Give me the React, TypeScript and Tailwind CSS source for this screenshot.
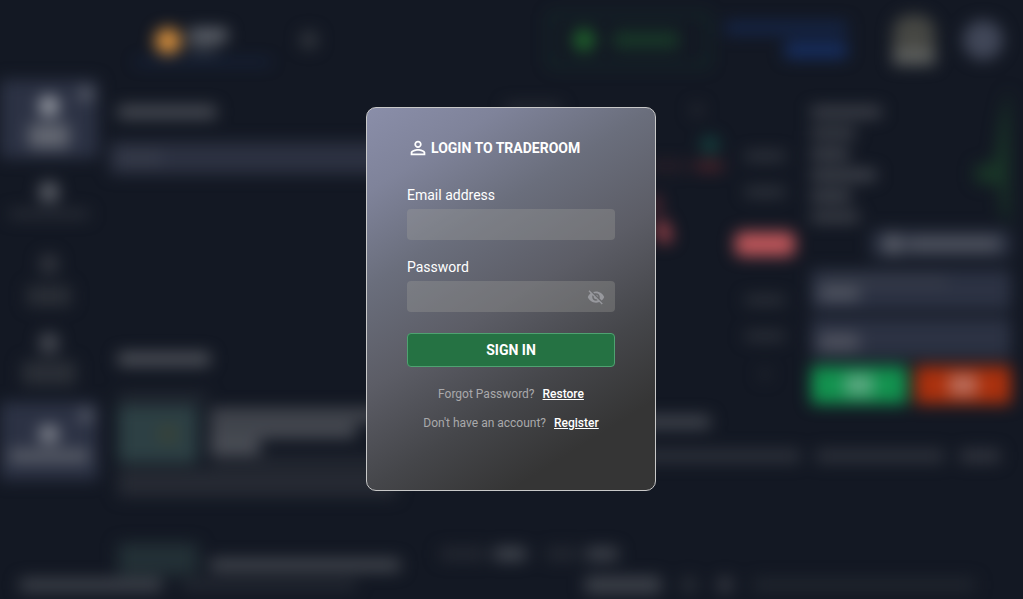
import type { ReactNode } from "react";
import { MdOutlinePersonOutline, MdVisibilityOff } from "react-icons/md";

function Block({ className }: { className: string }) {
  return <div className={`shrink-0 ${className}`} />;
}

function Header() {
  return (
    <div className="flex h-20 items-center pr-5 pl-[135px]">
      <div className="flex h-[46px] w-[136px] items-center gap-2 border-b-2 border-[#1a3a74] pt-1 pl-5">
        <Block className="size-[26px] rounded-full bg-[#d9913e]" />
        <div className="flex flex-col gap-1">
          <Block className="h-3 w-[38px] bg-[#6b6f77]" />
          <Block className="h-2 w-7 bg-[#3e434d]" />
        </div>
      </div>
      <Block className="ml-[29px] size-[18px] rounded-full bg-[#34383f]" />
      <div className="ml-auto flex h-[54px] w-[160px] items-center gap-[18px] rounded border-2 border-[#174030] pl-[22px]">
        <Block className="size-[22px] rounded-full bg-[#1f652c]" />
        <Block className="h-4 w-[66px] bg-[#183a28]" />
      </div>
      <div className="ml-4 flex w-[122px] flex-col items-end gap-2">
        <Block className="h-3 w-full bg-[#15264a]" />
        <Block className="h-4 w-[62px] bg-[#162e61]" />
      </div>
      <div className="ml-[46px] flex h-[50px] w-[42px] flex-col justify-end rounded-t-2xl bg-[#464743]">
        <Block className="h-4 bg-[#5e605e]" />
      </div>
      <Block className="ml-7 size-10 rounded-full bg-[#414758]" />
    </div>
  );
}

function SideTile({ children, badge }: { children: ReactNode; badge: string }) {
  return (
    <div className="relative flex h-[78px] w-[98px] shrink-0 flex-col items-center gap-2 bg-[#2c3244] pt-4">
      <div className={`absolute top-2 right-1.5 size-3 rounded-full ${badge}`} />
      {children}
    </div>
  );
}

function Sidebar() {
  return (
    <div className="flex w-[98px] flex-col">
      <SideTile badge="bg-[#74777f]">
        <Block className="size-5 rounded-full bg-[#a3a6ad]" />
        <Block className="h-6 w-10 bg-[#646872]" />
      </SideTile>
      <div className="flex h-[86px] shrink-0 flex-col items-center gap-2 pt-6">
        <Block className="size-5 rounded-full bg-[#63666e]" />
        <Block className="h-2 w-20 bg-[#2c3039]" />
      </div>
      <div className="flex h-[79px] shrink-0 flex-col items-center gap-3 pt-2.5">
        <Block className="size-5 rounded-full bg-[#34373f]" />
        <Block className="h-5 w-11 bg-[#2b2f37]" />
      </div>
      <div className="flex h-[79px] shrink-0 flex-col items-center gap-2 pt-2.5">
        <Block className="size-5 rounded-full bg-[#4c4f57]" />
        <Block className="h-6 w-[54px] bg-[#2b2f37]" />
      </div>
      <SideTile badge="bg-[#6b6f79]">
        <Block className="mt-2 h-4 w-5 rounded-full bg-[#8c8f97]" />
        <Block className="h-3 w-20 bg-[#5c606a]" />
      </SideTile>
    </div>
  );
}

function NewsPanel() {
  return (
    <div className="ml-3 flex w-[330px] flex-col">
      <Block className="mt-[26px] ml-2 h-3 w-[98px] bg-[#4e5159]" />
      <div className="mt-6 flex h-8 shrink-0 items-center bg-[#2c3141] pl-2">
        <Block className="h-3 w-11 bg-[#373c4a]" />
      </div>
      <Block className="mt-[179px] ml-2 h-3 w-[92px] bg-[#55585f]" />
      <Block className="mt-7 ml-2 h-2 w-[90px] bg-[#252a33]" />
      <div className="mt-1 ml-2 flex shrink-0 gap-2">
        <div className="flex h-[58px] w-20 shrink-0 items-center justify-end bg-[#2d4044] pr-5">
          <Block className="size-5 rounded-full bg-[#384238]" />
        </div>
        <div className="flex flex-col gap-1 pt-1 pl-1">
          <Block className="h-3 w-[190px] bg-[#4c4f56]" />
          <Block className="h-3 w-[146px] bg-[#53565d]" />
          <Block className="h-3 w-[50px] bg-[#5a5d64]" />
          <Block className="h-2 w-[190px] bg-[#292d36]" />
        </div>
      </div>
      <Block className="mt-1 ml-2 h-7 w-[278px] bg-[#262a33]" />
      <div className="mt-[46px] ml-2 flex shrink-0 gap-3">
        <Block className="h-8 w-20 bg-[#233036]" />
        <Block className="mt-4 h-3 w-[190px] bg-[#464a51]" />
      </div>
    </div>
  );
}

function PriceScale() {
  return (
    <div className="mr-1 flex w-[60px] flex-col items-center gap-7 pt-[72px]">
      <Block className="h-2 w-10 bg-[#373b43]" />
      <Block className="h-2 w-10 bg-[#373b43]" />
      <Block className="mt-2 h-6 w-full rounded-md bg-[#be565a]" />
      <Block className="mt-3 h-2 w-10 bg-[#33373f]" />
      <Block className="h-2 w-10 bg-[#33373f]" />
      <Block className="size-3 rounded-full bg-[#22262f]" />
    </div>
  );
}

function Chart() {
  return (
    <div className="flex min-w-0 flex-1 justify-end gap-2">
      <div className="flex flex-1 flex-col">
        <div className="flex justify-end gap-[130px] pt-6 pr-6">
          <Block className="h-2 w-14 bg-[#2c3039]" />
          <Block className="size-3 rounded-full bg-[#292c34]" />
        </div>
        <Block className="mt-5 mr-2 size-[18px] self-end rounded-full bg-[#15423f]" />
        <div className="mt-2 flex gap-2 self-end pr-1">
          <Block className="h-2 w-10 bg-[#2f2028]" />
          <Block className="h-2 w-7 bg-[#5a262c]" />
        </div>
        <svg className="mt-4 mr-10 h-16 w-12 self-end" viewBox="0 0 48 64" aria-hidden="true">
          <path d="M16 10L17 28" stroke="#642c35" strokeWidth="9" fill="none" />
          <path d="M21 36L28 56" stroke="#a0434a" strokeWidth="13" fill="none" />
        </svg>
      </div>
      <PriceScale />
    </div>
  );
}

function OrderPanel() {
  return (
    <div className="flex w-[200px] flex-col">
      <div className="flex justify-between">
        <div className="flex flex-col gap-[11px] pt-[27px]">
          <Block className="h-2.5 w-[70px] bg-[#454850]" />
          <Block className="h-2.5 w-11 bg-[#42454d]" />
          <Block className="h-2.5 w-[38px] bg-[#484b53]" />
          <Block className="h-2.5 w-[65px] bg-[#484b53]" />
          <Block className="h-2.5 w-10 bg-[#484b53]" />
          <Block className="h-2.5 w-12 bg-[#42454d]" />
        </div>
        <svg className="h-[150px] w-9" viewBox="0 0 36 150" aria-hidden="true">
          <path d="M34 8V148L26 126V106L0 102V86L20 82L26 40Z" fill="#193527" />
        </svg>
      </div>
      <div className="flex h-7 w-[140px] items-center gap-1 self-end rounded bg-[#2a3040] px-3">
        <Block className="size-5 rounded-full bg-[#5c606a]" />
        <Block className="h-3 w-[92px] bg-[#565a64]" />
      </div>
      <div className="mt-3 flex h-10 flex-col gap-1 bg-[#2c3243] p-2">
        <Block className="h-1.5 w-32 bg-[#3d424d]" />
        <Block className="h-3 w-10 bg-[#555965]" />
      </div>
      <div className="mt-2 flex h-10 flex-col justify-end bg-[#2c3243] p-2">
        <Block className="h-4 w-10 bg-[#50535f]" />
      </div>
      <div className="mt-2 grid h-[38px] grid-cols-2 gap-2">
        <div className="grid place-items-center bg-[#13924f]">
          <Block className="h-5 w-7 bg-[#5fa883]" />
        </div>
        <div className="grid place-items-center bg-[#aa310e]">
          <Block className="h-5 w-7 bg-[#b9705f]" />
        </div>
      </div>
    </div>
  );
}

function InfoPanel() {
  return (
    <div className="flex flex-1 flex-col pt-2">
      <Block className="ml-[180px] h-3 w-[90px] bg-[#464a52]" />
      <div className="mt-[22px] flex gap-4 pl-[180px]">
        <Block className="h-3 w-[180px] bg-[#30343d]" />
        <Block className="h-3 w-[128px] bg-[#30343d]" />
        <Block className="h-3 w-10 bg-[#353841]" />
      </div>
      <div className="mt-[86px] flex gap-2">
        <Block className="h-3 w-[46px] bg-[#252932]" />
        <Block className="h-3 w-8 bg-[#484c54]" />
        <Block className="ml-3 h-3 w-8 bg-[#252932]" />
        <Block className="h-3 w-8 bg-[#43474f]" />
      </div>
    </div>
  );
}

function Footer() {
  return (
    <div className="flex h-7 shrink-0 items-center pl-5">
      <Block className="h-3 w-[142px] bg-[#42464e]" />
      <Block className="ml-5 h-2 w-[174px] bg-[#2a2e37]" />
      <div className="mr-12 ml-auto flex items-center gap-5">
        <Block className="h-4 w-[76px] bg-[#40444c]" />
        <Block className="size-4 rounded-full bg-[#2b2f37]" />
        <Block className="size-4 rounded-full bg-[#393c44]" />
        <Block className="h-3 w-[222px] bg-[#22272f]" />
      </div>
    </div>
  );
}

function TradeRoom() {
  return (
    <div className="absolute inset-0 overflow-hidden bg-[#131823]" aria-hidden="true">
      <div className="flex h-full flex-col blur-sm">
        <Header />
        <div className="flex min-h-0 flex-1">
          <Sidebar />
          <NewsPanel />
          <div className="flex min-w-0 flex-1 flex-col pr-3">
            <div className="flex h-[328px] shrink-0 gap-3">
              <Chart />
              <OrderPanel />
            </div>
            <InfoPanel />
          </div>
        </div>
        <Footer />
      </div>
    </div>
  );
}

function LoginForm() {
  return (
    <form
      className="relative flex w-[290px] flex-col rounded-[10px] border border-[#c8c8c8] bg-[linear-gradient(148deg,#8a8ea9_0%,#7f839a_15%,#6a6e7c_32%,#5c5d66_50%,#45464a_68%,#353535_84%,#353535_100%)] px-10 pt-[30px] pb-[57px] text-white"
      onSubmit={(event) => event.preventDefault()}
    >
      <h1 className="flex h-5 items-center gap-0.5 text-sm font-bold">
        <MdOutlinePersonOutline className="size-[22px]" aria-hidden="true" />
        LOGIN TO TRADEROOM
      </h1>
      <label htmlFor="email" className="mt-[27px] text-sm leading-5">
        Email address
      </label>
      <input
        id="email"
        type="email"
        className="mt-1 h-[31px] w-full rounded bg-[#a4a4a0]/30 px-3 text-sm outline-none"
      />
      <label htmlFor="password" className="mt-[17px] text-sm leading-5">
        Password
      </label>
      <div className="relative mt-1 flex">
        <input
          id="password"
          type="password"
          className="h-[31px] w-full rounded bg-[#a4a4a0]/30 pr-9 pl-3 text-sm outline-none"
        />
        <button
          type="button"
          aria-label="Show password"
          className="absolute inset-y-0 right-2.5 flex items-center text-[#97989d]"
        >
          <MdVisibilityOff className="size-[18px]" />
        </button>
      </div>
      <button
        type="submit"
        className="mt-[21px] h-[34px] rounded border border-[#4fa271] bg-[#257243] text-sm font-bold"
      >
        SIGN IN
      </button>
      <p className="mt-[17px] text-center text-xs leading-5 text-[#a9a9ab]">
        Forgot Password?
        <a href="#restore" className="ml-2 font-medium text-white underline">
          Restore
        </a>
      </p>
      <p className="mt-[9px] text-center text-xs leading-5 text-[#a9a9ab]">
        Don't have an account?
        <a href="#register" className="ml-2 font-medium text-white underline">
          Register
        </a>
      </p>
    </form>
  );
}

export default function App() {
  return (
    <div className="relative grid min-h-screen place-items-center bg-[#131823] pr-px pb-px font-[Roboto,sans-serif]">
      <TradeRoom />
      <LoginForm />
    </div>
  );
}
